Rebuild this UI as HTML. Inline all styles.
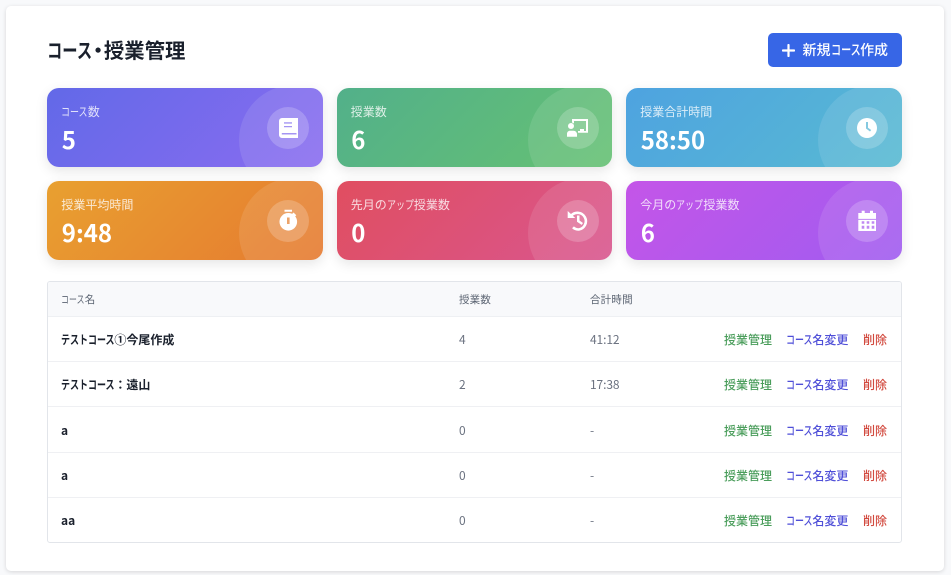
<!DOCTYPE html>
<html lang="ja"><head><meta charset="utf-8">
<style>
*{box-sizing:border-box;margin:0;padding:0}
html,body{width:951px;height:575px;overflow:hidden;background:#f8f9fb;font-family:"Noto Sans CJK JP","Liberation Sans",sans-serif}
i{font-style:normal;display:inline-block;white-space:nowrap;transform:scaleX(.75);transform-origin:0 50%;margin-right:-.75em}
i.k6{margin-right:-1.5em}
#panel{position:absolute;left:5.600px;top:5.600px;width:938.600px;height:565px;background:#fff;border-radius:5px;box-shadow:0 1px 4px rgba(0,0,0,.14)}
h1{position:absolute;left:47px;top:34.300px;font-size:20.400px;line-height:30px;font-weight:700;color:#1a202c;white-space:nowrap}
h1 b{display:inline-block;width:12px;text-align:center;font-weight:700}
h1 b u{text-decoration:none;display:inline-block;margin:0 -4px}
#btn{position:absolute;left:768px;top:33.400px;width:134.300px;height:34px;background:#3766e6;border-radius:5px;color:#fff;font-size:14px;font-weight:500;line-height:34px;padding-left:34.500px;white-space:nowrap}
#btn svg{position:absolute;left:14px;top:10.500px}
#btn i{transform:scaleX(.72);margin-right:-.84em}
.card{position:absolute;width:275.700px;height:79px;border-radius:12px;overflow:hidden;color:#fff;box-shadow:0 4px 12px rgba(0,0,0,.1)}
.card:before{content:"";position:absolute;left:191.600px;top:-3px;width:110px;height:110px;border-radius:50%;background:rgba(255,255,255,.1)}
.lb{position:absolute;left:14px;top:14.500px;font-size:12px;line-height:18px;opacity:.8;white-space:nowrap}
.v{position:absolute;left:14.400px;top:32px;font-size:24px;line-height:38px;font-weight:700;white-space:nowrap}
.ic{position:absolute;left:220px;top:19px;width:42px;height:42px;border-radius:50%;background:rgba(255,255,255,.2)}
.ic svg{position:absolute;left:11px;top:11px;width:20px;height:20px;fill:#fff;overflow:visible}
#tbl{position:absolute;left:47.400px;top:281px;width:855px;height:262px;border:1px solid #e2e5ea;border-radius:3px;overflow:hidden;background:#fff}
#hd{position:absolute;left:0;top:0;width:100%;height:35px;background:#f8f9fb;border-bottom:1px solid #eef0f3}
.th{position:absolute;top:9.500px;font-size:10.500px;line-height:16px;color:#5b6472;white-space:nowrap;letter-spacing:.2px}
.row{position:absolute;left:0;width:100%;height:45px;border-bottom:1px solid #eff0f3}
.row:last-child{border-bottom:0}
.row span{position:absolute;top:13px;line-height:20px;white-space:nowrap;font-size:12px}
.n{left:12.600px;font-weight:700;color:#1a202c}
.c{left:410.600px;color:#6b7280}
.t{left:541.600px;color:#6b7280;letter-spacing:-.1px}
.a1{left:675.600px;color:#4a9d5b;font-weight:500}
.a2{left:737.600px;color:#4f4fd8;font-weight:500}
.a3{left:814.600px;color:#d24a3f;font-weight:500}
</style></head><body>
<div id="panel"></div>
<h1><i>コース</i><b><u>・</u></b>授業管理</h1>
<div id="btn"><svg width="13" height="13" viewBox="0 0 13 13"><path d="M6.500 1v11M1 6.500h11" stroke="#fff" stroke-width="2.200" stroke-linecap="round"/></svg>新規<i>コース</i>作成</div>

<div class="card" style="left:47.400px;top:88px;background:linear-gradient(135deg,#6269e8,#8a6cf0)">
<div class="lb"><i>コース</i>数</div><div class="v">5</div>
<div class="ic"><svg viewBox="0 0 20 20"><path fill-rule="evenodd" d="M4 0H20V20H4a3 3 0 0 1-3-3V3a3 3 0 0 1 3-3zM6 4.300v1.300h8V4.300zM6 8v1.300h8V8zM3.800 15v1.500H18.500V15z"/></svg></div></div>

<div class="card" style="left:336.800px;top:88px;background:linear-gradient(135deg,#52b08a,#66c173)">
<div class="lb">授業数</div><div class="v">6</div>
<div class="ic"><svg viewBox="0 0 20 20"><circle cx="3" cy="8" r="3"/><path d="M-1 18.700v-3c0-1.700 1.300-3 3-3h3.500c2 0 3.500 1.600 3.500 3.700v2.300z"/><path d="M4 1H20V14.700H10V13H12V11H16V13H18V3H6V5.500L4 4.500z"/></svg></div></div>

<div class="card" style="left:626.300px;top:88px;background:linear-gradient(135deg,#4ea3e0,#58bad2)">
<div class="lb">授業合計時間</div><div class="v">58:50</div>
<div class="ic"><svg viewBox="0 0 20 20"><path fill-rule="evenodd" d="M10 0a10 10 0 1 1 0 20 10 10 0 0 1 0-20zM9 4v6.500l4 3 1.200-1.500L11 9.800V4z"/></svg></div></div>

<div class="card" style="left:47.400px;top:181px;background:linear-gradient(135deg,#e8a030,#e67a30)">
<div class="lb">授業平均時間</div><div class="v">9:48</div>
<div class="ic"><svg viewBox="0 0 20 20"><path fill-rule="evenodd" d="M10.300 2a8.800 8.800 0 1 1 0 17.600 8.800 8.800 0 0 1 0-17.600zM9 6.500v6.500h2.600V6.500z"/><path d="M6.500-1.300h7.500v2H6.500zM15.500 1.500l2.800 2.800-1.500 1.500-2.800-2.800z"/></svg></div></div>

<div class="card" style="left:336.800px;top:181px;background:linear-gradient(135deg,#e04e60,#d9568f)">
<div class="lb">先月の<i>アップ</i>授業数</div><div class="v">0</div>
<div class="ic"><svg viewBox="0 0 20 20"><path d="M-.300 0L7.300 7H-.300z"/><path d="M3.300 4.500A8.400 8.400 0 1 1 10.800 18.500C8.500 18.500 6.500 17.800 5 16.300" fill="none" stroke="#fff" stroke-width="2.600"/><path d="M9 4.500h2.500v5l3.500 2.500-1.300 1.900L9 10.700z"/></svg></div></div>

<div class="card" style="left:626.300px;top:181px;background:linear-gradient(135deg,#c455e8,#a05cf0)">
<div class="lb">今月の<i>アップ</i>授業数</div><div class="v">6</div>
<div class="ic"><svg viewBox="0 0 20 20"><path fill-rule="evenodd" d="M4.700-.300h3V2h5.300V-.300h3V2H19V7.900H1.300V2h3.400zM1.300 8.900H19V20H1.300zM4.700 10.300v2.500h2.600v-2.500zm5 0v2.500h2.600v-2.500zm5 0v2.500h2.600v-2.500zM4.700 14.800v2.900h2.600v-2.900zm5 0v2.900h2.600v-2.900zm5 0v2.900h2.600v-2.900z"/></svg></div></div>

<div id="tbl">
<div id="hd"><div class="th" style="left:12.600px"><i>コース</i>名</div><div class="th" style="left:410.600px">授業数</div><div class="th" style="left:541.600px">合計時間</div></div>
<div class="row" style="top:35px"><span class="n"><i class="k6">テストコース</i>①今尾作成</span><span class="c">4</span><span class="t">41:12</span><span class="a1">授業管理</span><span class="a2"><i>コース</i>名変更</span><span class="a3">削除</span></div>
<div class="row" style="top:80px"><span class="n"><i class="k6">テストコース</i>：遠山</span><span class="c">2</span><span class="t">17:38</span><span class="a1">授業管理</span><span class="a2"><i>コース</i>名変更</span><span class="a3">削除</span></div>
<div class="row" style="top:125.500px"><span class="n">a</span><span class="c">0</span><span class="t">-</span><span class="a1">授業管理</span><span class="a2"><i>コース</i>名変更</span><span class="a3">削除</span></div>
<div class="row" style="top:170.500px"><span class="n">a</span><span class="c">0</span><span class="t">-</span><span class="a1">授業管理</span><span class="a2"><i>コース</i>名変更</span><span class="a3">削除</span></div>
<div class="row" style="top:216px"><span class="n">aa</span><span class="c">0</span><span class="t">-</span><span class="a1">授業管理</span><span class="a2"><i>コース</i>名変更</span><span class="a3">削除</span></div>
</div>
</body></html>
